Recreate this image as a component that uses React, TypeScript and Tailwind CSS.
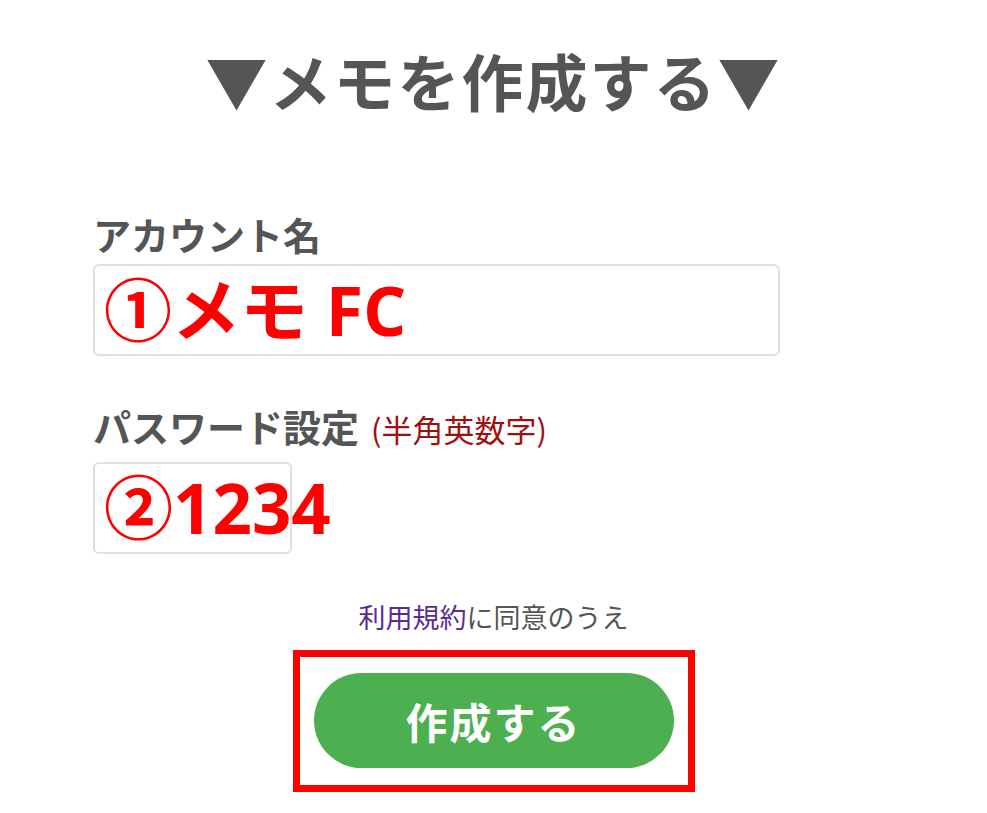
const font = "font-['Noto_Sans_CJK_JP','Noto_Sans',sans-serif]";

export default function App() {
  return (
    <div className={`w-[987px] h-[813px] bg-white text-[#555] ${font}`}>
      {/* タイトル */}
      <h1 className="pt-[34px] text-center text-[62px] leading-[92px] font-bold tracking-[2px]">
        ▼メモを作成する▼
      </h1>

      <form className="mt-[88px] pl-[93px] w-[780px]">
        {/* アカウント名 */}
        <div className="text-[38px] leading-[40px] font-bold">アカウント名</div>
        <div className="mt-[10px] h-[92px] w-[687px] border-2 border-[#e0e0e0] rounded-md px-[9px] flex items-center">
          <span className="text-[68px] leading-none font-bold text-[#ff0000] whitespace-nowrap font-['Open_Sans','Noto_Sans_CJK_JP',sans-serif]">
            ①メモ FC
          </span>
        </div>

        {/* パスワード */}
        <div className="mt-[50px] flex items-baseline gap-[12px]">
          <span className="text-[38px] leading-[40px] font-bold">パスワード設定</span>
          <span className="text-[31px] text-[#a01010]">(半角英数字)</span>
        </div>
        <div className="mt-[9px] h-[92px] w-[199px] border-2 border-[#e0e0e0] rounded-md px-[9px] flex items-center">
          <span className="text-[69px] leading-none font-bold text-[#ff0000] whitespace-nowrap font-['Open_Sans','Noto_Sans_CJK_JP',sans-serif]">
            ②1234
          </span>
        </div>
      </form>

      {/* 同意 */}
      <p className="mt-[46px] text-center text-[27px] leading-[34px]">
        <span className="text-[#5b2c8f]">利用規約</span>に同意のうえ
      </p>

      <div className="mt-[16px] flex justify-center">
        <div className="border-[7px] border-[#ff0000] w-[402px] h-[142px] flex items-center justify-center">
          <button
            type="button"
            className="w-[360px] h-[95px] rounded-full bg-[#4caf50] text-white text-[42px] font-bold tracking-[2px]"
          >
            作成する
          </button>
        </div>
      </div>
    </div>
  );
}
